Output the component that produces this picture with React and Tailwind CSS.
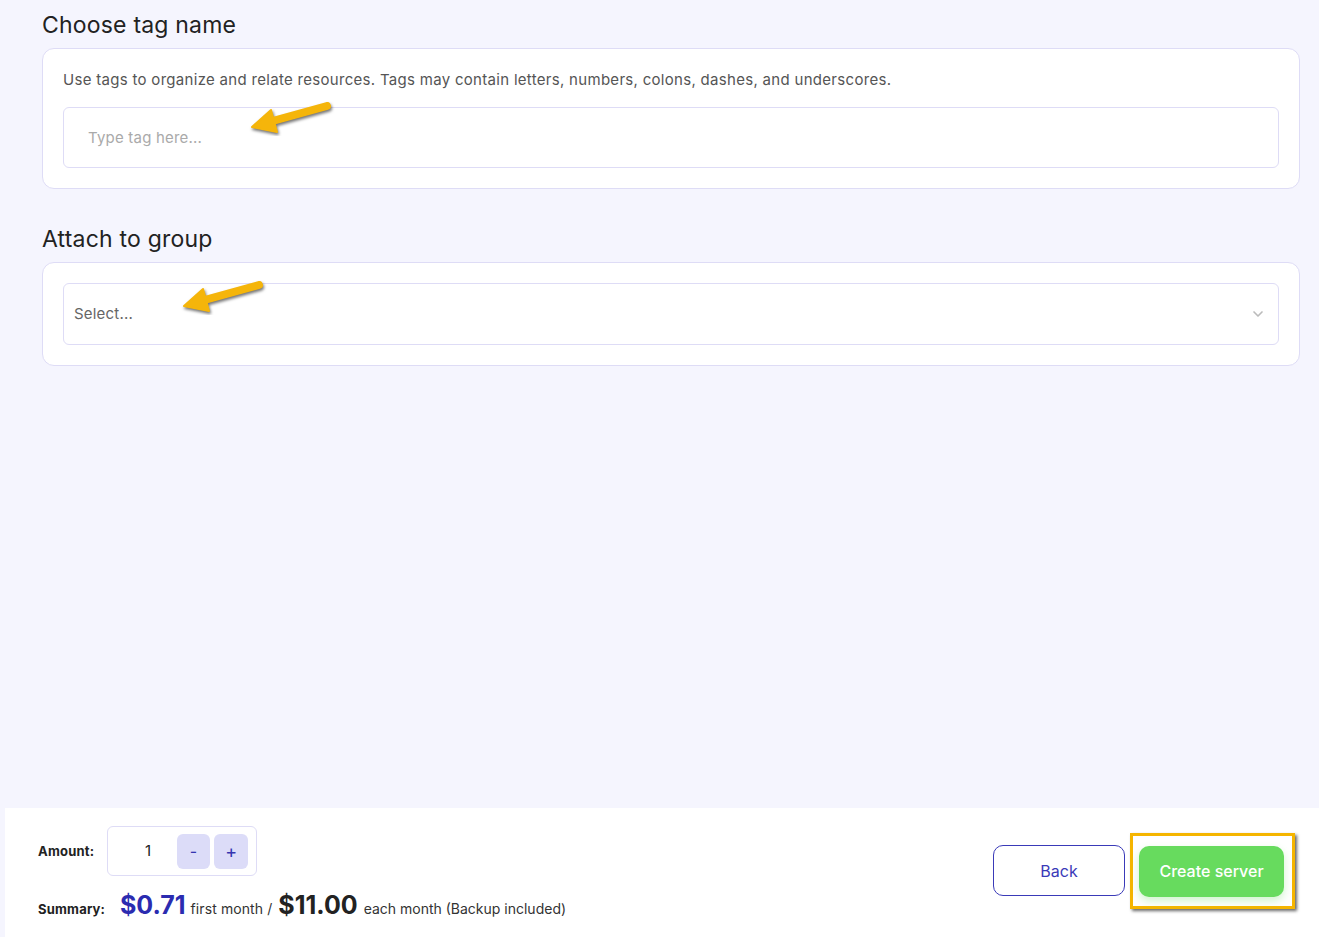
import React from 'react';
import { ChevronDown } from 'lucide-react';

// Yellow annotation arrow pointing left-down
const Arrow = ({ className }) => (
  <svg className={className} width="86" height="36" viewBox="0 0 86 36" fill="none">
    <g style={{ filter: 'drop-shadow(1px 2px 1.5px rgba(0,0,0,0.55))' }}>
      <path d="M78 6 L20 22" stroke="#f5b50a" strokeWidth="8" strokeLinecap="round" />
      <path d="M3 27 L22 10 L28 32 Z" fill="#f5b50a" stroke="#f5b50a" strokeWidth="2" strokeLinejoin="round" />
    </g>
  </svg>
);

export default function App() {
  return (
    <div
      className="min-h-[937px] w-full bg-[#f5f5fe] flex flex-col text-[#222]"
      style={{ fontFamily: 'Inter, "Noto Sans", sans-serif' }}
    >
      <div className="flex-1 pl-[42px] pr-[19px]">
        {/* Tag name */}
        <h2 className="text-[23px] leading-[30px] pt-[10px] pb-[8px] tracking-[0.2px] text-[#222]">Choose tag name</h2>
        <div className="bg-white border border-[#dedcf6] rounded-[12px] px-[20px] pt-[20px] pb-[20px]">
          <p className="text-[15px] leading-[21px] tracking-[0.3px] text-[#555]">
            Use tags to organize and relate resources. Tags may contain letters, numbers, colons, dashes, and underscores.
          </p>
          <div className="relative mt-[17px]">
            <input
              placeholder="Type tag here..."
              className="w-full h-[61px] border border-[#dedcf6] rounded-[6px] pl-[24px] text-[15px] tracking-[0.2px] placeholder:text-[#aaa] outline-none"
            />
            <Arrow className="absolute left-[186px] top-[-7px]" />
          </div>
        </div>

        {/* Group */}
        <h2 className="text-[23px] leading-[30px] pt-[35px] pb-[8px] tracking-[0.2px] text-[#222]">Attach to group</h2>
        <div className="bg-white border border-[#dedcf6] rounded-[12px] p-[20px]">
          <div className="relative h-[62px] border border-[#dedcf6] rounded-[6px] flex items-center justify-between pl-[10px] pr-[12px]">
            <span className="text-[15px] tracking-[0.2px] text-[#666]">Select...</span>
            <ChevronDown className="w-[16px] h-[16px] text-[#bbb]" strokeWidth={2.5} />
            <Arrow className="absolute left-[117px] top-[-5px]" />
          </div>
        </div>
      </div>

      {/* Bottom bar */}
      <div className="ml-[5px] h-[129px] bg-white flex items-center justify-between pl-[33px] pr-[24px]">
        <div className="flex flex-col gap-[11px] pt-[6px]">
          <div className="flex items-center">
            <span className="text-[13px] font-bold w-[69px] tracking-[0.2px]">Amount:</span>
            <div className="w-[150px] h-[50px] border border-[#dedcf6] rounded-[6px] flex items-center pl-[37px] pr-[8px]">
              <span className="text-[15px] w-[32px]">1</span>
              <button className="w-[34px] h-[35px] rounded-[6px] bg-[#dcdcf8] text-[#3535b0] text-[16px]">-</button>
              <button className="w-[34px] h-[35px] rounded-[6px] bg-[#dcdcf8] text-[#3535b0] text-[18px] ml-[4px]">+</button>
            </div>
          </div>
          <div className="flex items-baseline">
            <span className="text-[13px] font-bold w-[82px] tracking-[0.2px]">Summary:</span>
            <span className="text-[25px] font-bold text-[#2b2bb0] mr-[5px]">$0.71</span>
            <span className="text-[14px] text-[#333] tracking-[0.1px] mr-[6px]">first month /</span>
            <span className="text-[25px] font-bold text-[#222] mr-[6px]">$11.00</span>
            <span className="text-[14px] text-[#333]">each month (Backup included)</span>
          </div>
        </div>

        <div className="flex items-center gap-[5px] pb-[4px]">
          <button className="w-[132px] h-[51px] border border-[#3a3ab8] rounded-[10px] text-[16px] text-[#3a3ab8] bg-white">
            Back
          </button>
          <div className="relative pt-[10px] pb-[9px] pl-[6px] pr-[8px] border-[3px] border-[#f5b500] shadow-[2px_2px_3px_rgba(0,0,0,0.6)]">
            <button className="w-[145px] h-[51px] rounded-[10px] bg-[#67db5e] text-white text-[16px] font-medium shadow-[0_4px_8px_rgba(103,219,94,0.3)]">
              Create server
            </button>
          </div>
        </div>
      </div>
    </div>
  );
}
